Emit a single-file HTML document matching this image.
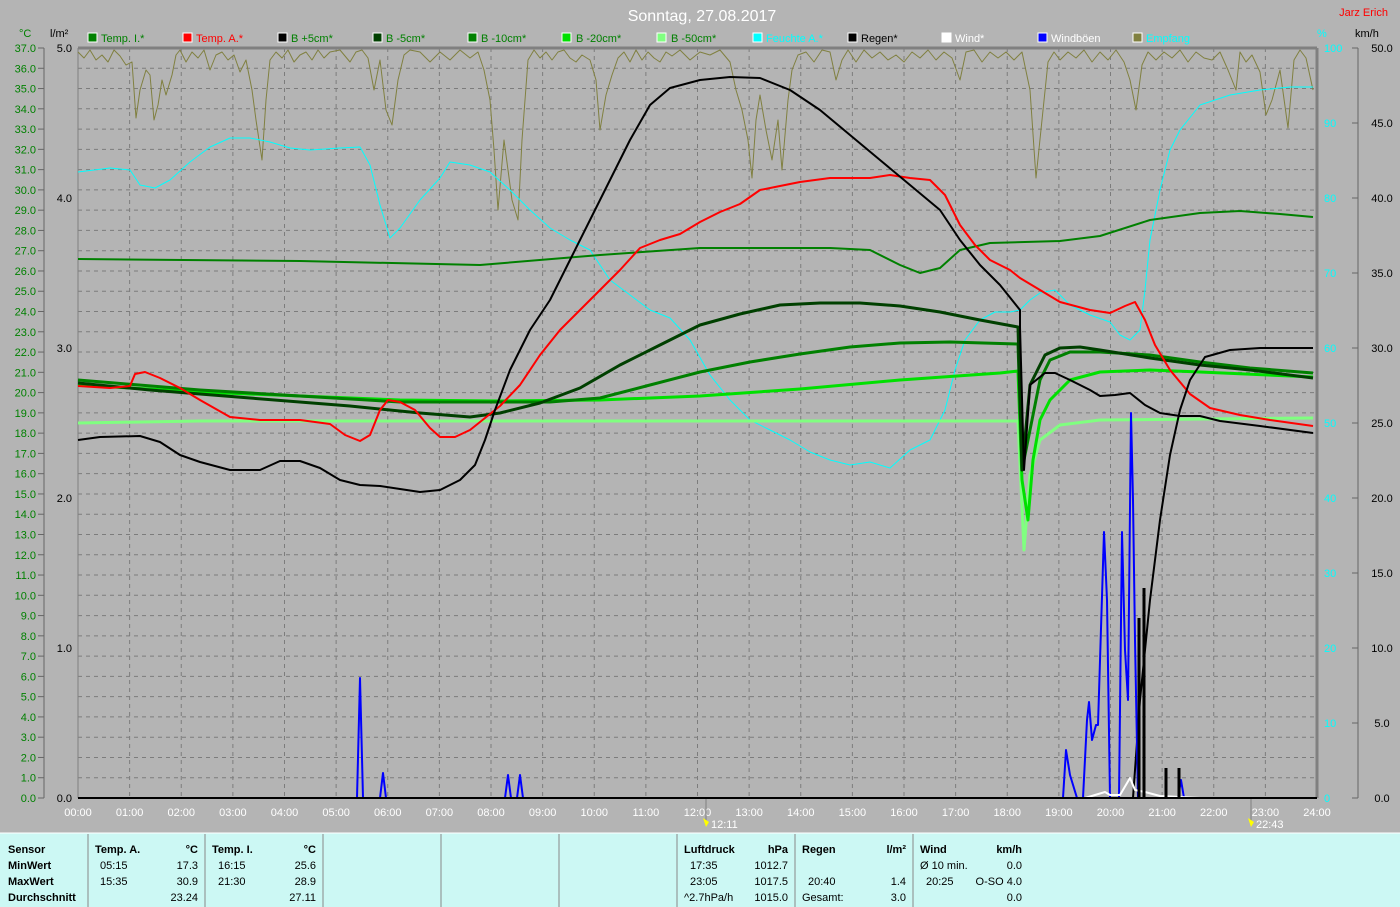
<!DOCTYPE html>
<html><head><meta charset="utf-8"><style>
html,body{margin:0;padding:0;background:#b4b4b4;}
svg{display:block;font-family:"Liberation Sans",sans-serif;}
</style></head><body>
<svg width="1400" height="907" viewBox="0 0 1400 907" xmlns="http://www.w3.org/2000/svg">
<rect width="1400" height="907" fill="#b4b4b4"/>
<text x="702" y="21" font-size="16" fill="#fff" text-anchor="middle">Sonntag, 27.08.2017</text>
<text x="1388" y="16" font-size="11" fill="#f00" text-anchor="end">Jarz Erich</text>
<g font-size="11">
<text x="19" y="37" fill="#008000">°C</text><text x="50" y="37" fill="#000">l/m²</text>
<text x="1317" y="37" fill="#0ff">%</text><text x="1355" y="37" fill="#000">km/h</text>
</g>
<g font-size="11">
<rect x="88" y="33" width="9" height="9" fill="#008000" stroke="#fff"/><text x="101" y="42" fill="#008000">Temp. I.*</text>
<rect x="183" y="33" width="9" height="9" fill="#f00" stroke="#fff"/><text x="196" y="42" fill="#f00">Temp. A.*</text>
<rect x="278" y="33" width="9" height="9" fill="#000" stroke="#fff"/><text x="291" y="42" fill="#008000">B +5cm*</text>
<rect x="373" y="33" width="9" height="9" fill="#004000" stroke="#fff"/><text x="386" y="42" fill="#008000">B -5cm*</text>
<rect x="468" y="33" width="9" height="9" fill="#008000" stroke="#fff"/><text x="481" y="42" fill="#008000">B -10cm*</text>
<rect x="562" y="33" width="9" height="9" fill="#00e000" stroke="#fff"/><text x="576" y="42" fill="#008000">B -20cm*</text>
<rect x="657" y="33" width="9" height="9" fill="#80ff80" stroke="#fff"/><text x="671" y="42" fill="#008000">B -50cm*</text>
<rect x="753" y="33" width="9" height="9" fill="#0ff" stroke="#fff"/><text x="766" y="42" fill="#0ff">Feuchte A.*</text>
<rect x="848" y="33" width="9" height="9" fill="#000" stroke="#fff"/><text x="861" y="42" fill="#000">Regen*</text>
<rect x="942" y="33" width="9" height="9" fill="#fff" stroke="#fff"/><text x="955" y="42" fill="#fff">Wind*</text>
<rect x="1038" y="33" width="9" height="9" fill="#00f" stroke="#fff"/><text x="1051" y="42" fill="#fff">Windböen</text>
<rect x="1133" y="33" width="9" height="9" fill="#808040" stroke="#fff"/><text x="1146" y="42" fill="#0ff">Empfang</text>
</g>
<g id="grid" stroke="#7c7c7c" stroke-width="1" stroke-dasharray="4,4"></g>
<script>
(function(){
var ns="http://www.w3.org/2000/svg",svg=document.currentScript.parentNode,g=document.getElementById('grid');
function el(t,a,p,txt){var e=document.createElementNS(ns,t);for(var k in a)e.setAttribute(k,a[k]);if(txt!==undefined)e.textContent=txt;(p||svg).appendChild(e);return e;}
for(var i=1;i<37;i++){var y=48+i*750/37;el('line',{x1:78,x2:1317,y1:y,y2:y},g);}
for(var h=1;h<24;h++){var x=78+h*1239/24;el('line',{x1:x,x2:x,y1:48,y2:798},g);}
var lab=el('g',{'font-size':11});
for(var i=0;i<=37;i++){var y=798-i*750/37;el('text',{x:36,y:y+4,fill:'#008000','text-anchor':'end'},lab,(i).toFixed(1));el('line',{x1:38,x2:44,y1:y,y2:y,stroke:'#666'},lab);}
el('line',{x1:44,x2:44,y1:48,y2:798,stroke:'#666'},lab);
for(var i=0;i<=5;i++){var y=798-i*150;el('text',{x:72,y:y+4,fill:'#000','text-anchor':'end'},lab,i.toFixed(1));}
for(var i=0;i<=10;i++){var y=798-i*75;el('text',{x:1324,y:y+4,fill:'#0ff'},lab,String(i*10));el('text',{x:1382,y:y+4,fill:'#000','text-anchor':'middle'},lab,(i*5).toFixed(1));el('line',{x1:1352,x2:1358,y1:y,y2:y,stroke:'#666'},lab);}
el('line',{x1:1358,x2:1358,y1:48,y2:798,stroke:'#666'},lab);
for(var h=0;h<=24;h++){var x=78+h*1239/24;el('text',{x:x,y:816,fill:'#fff','text-anchor':'middle'},lab,(h<10?'0':'')+h+':00');}
})();
</script>
<line x1="78" y1="48" x2="1317" y2="48" stroke="#808080" stroke-width="3"/>
<line x1="78" y1="48" x2="78" y2="798" stroke="#808080" stroke-width="1"/>
<line x1="1317" y1="48" x2="1317" y2="798" stroke="#808080" stroke-width="3"/>
<line x1="706" y1="798" x2="706" y2="822" stroke="#808080"/>
<line x1="1251" y1="798" x2="1251" y2="822" stroke="#808080"/>
<g font-size="11" fill="#fff"><text x="711" y="828">12:11</text><text x="1256" y="828">22:43</text></g>
<path d="M703 818l3 9 3-5z" fill="#ff0"/><path d="M1248 818l3 9 3-5z" fill="#ff0"/>
<g fill="none" stroke-linejoin="round">
<polyline stroke="#808040" stroke-width="1" points="78,52 84,58 90,50 96,60 102,55 108,62 114,50 120,56 126,65 132,62 136,118 140,90 146,70 150,75 154,120 158,105 162,80 166,95 172,75 176,55 180,50 186,62 192,52 198,58 204,50 210,70 216,55 222,52 228,60 234,55 240,72 246,60 252,90 256,120 262,160 266,100 270,60 276,52 282,58 288,50 294,62 300,55 306,52 312,60 318,50 324,58 330,52 340,50 350,62 356,52 362,50 368,58 374,90 380,60 386,110 392,125 398,80 404,55 410,50 420,52 430,62 440,52 450,60 460,50 470,58 478,52 484,70 490,100 494,150 498,210 504,140 508,170 512,200 518,220 522,140 528,60 534,50 540,58 546,52 552,60 558,52 564,50 570,58 576,62 582,55 590,60 596,80 600,130 606,95 612,75 618,58 624,52 630,62 636,50 642,60 648,52 654,58 660,62 666,52 672,56 680,50 690,60 700,52 710,55 720,50 730,62 736,90 742,110 748,140 752,178 756,120 760,95 766,130 772,160 778,120 782,170 788,100 792,70 798,55 806,52 814,62 822,50 830,52 836,80 842,60 848,50 856,62 864,50 872,58 880,52 888,60 896,55 904,62 912,52 920,58 928,50 936,60 944,52 952,58 960,80 966,52 974,50 982,62 990,52 998,58 1006,52 1014,60 1022,52 1030,90 1036,178 1042,120 1048,62 1054,52 1060,60 1068,52 1076,58 1084,50 1092,62 1100,52 1108,60 1116,50 1124,62 1130,80 1136,110 1142,65 1148,52 1156,60 1164,52 1172,58 1180,50 1188,62 1196,52 1204,58 1212,60 1220,52 1228,70 1236,90 1240,52 1246,62 1252,55 1260,72 1266,115 1272,100 1280,70 1288,128 1294,60 1300,50 1306,58 1313,90"/>
<polyline stroke="#0ff" stroke-width="1" points="78,172 110,168 130,170 140,185 155,188 170,180 190,162 210,147 230,138 250,138 270,142 290,148 310,150 340,148 360,147 370,165 380,205 390,238 400,228 420,200 440,178 450,162 470,165 490,172 510,190 530,210 550,228 570,240 590,250 610,280 630,295 650,310 670,318 690,340 710,375 730,400 750,420 770,430 790,440 810,452 830,460 850,465 870,462 890,468 910,450 930,440 945,410 955,370 965,340 980,320 995,312 1010,312 1020,310 1030,300 1040,293 1055,290 1070,305 1090,315 1110,322 1120,335 1130,340 1140,330 1145,290 1150,240 1160,190 1170,150 1180,130 1200,105 1230,95 1260,90 1290,87 1313,87"/>
<polyline stroke="#008000" stroke-width="2" points="78,259 300,261 480,265 600,255 700,248 830,248 870,250 900,265 920,273 940,268 960,250 990,243 1060,241 1100,236 1150,220 1200,213 1240,211 1280,214 1313,217"/>
<polyline stroke="#80ff80" stroke-width="3" points="78,423 200,421 1018,421 1024,550 1030,475 1040,440 1060,425 1100,420 1313,418"/>
<polyline stroke="#00e000" stroke-width="3" points="78,385 200,392 300,396 400,400 500,401 600,400 700,396 800,389 900,380 1000,373 1018,371 1022,480 1028,520 1033,460 1040,420 1050,400 1070,380 1100,372 1150,370 1200,372 1313,377"/>
<polyline stroke="#008000" stroke-width="3" points="78,380 200,390 300,396 400,402 500,402 550,402 600,398 650,385 700,372 750,362 800,354 850,347 900,343 950,342 1018,344 1022,470 1030,430 1040,380 1050,360 1070,352 1100,352 1150,355 1200,362 1250,368 1313,373"/>
<polyline stroke="#004000" stroke-width="3" points="78,383 150,390 250,398 350,406 420,413 470,417 500,413 540,403 580,388 620,365 660,345 700,325 740,314 780,305 820,303 860,303 900,306 940,312 980,320 1018,327 1022,470 1030,385 1035,375 1045,355 1060,348 1080,347 1100,350 1150,358 1200,365 1250,370 1313,378"/>
<polyline stroke="#f00" stroke-width="2" points="78,386 110,388 130,386 135,374 145,372 160,378 180,388 200,400 230,417 260,420 300,420 330,424 345,435 360,441 370,435 380,410 388,400 400,402 415,410 430,428 440,437 455,437 470,430 485,418 500,406 520,385 540,355 560,330 580,310 600,290 620,270 640,248 660,240 680,234 700,222 720,212 740,204 760,190 780,186 800,182 830,178 870,178 890,175 910,178 930,180 945,195 960,225 975,245 990,260 1010,270 1020,278 1040,290 1060,302 1090,310 1110,313 1125,306 1135,302 1145,320 1155,345 1170,370 1190,394 1210,408 1240,415 1270,420 1313,426"/>
<polyline stroke="#000" stroke-width="2" points="78,440 100,437 140,436 160,442 180,455 200,462 230,470 260,470 280,461 300,461 320,468 340,480 360,485 380,486 400,489 420,492 440,490 460,480 475,465 485,440 495,410 510,370 530,330 550,300 570,260 590,220 610,180 630,140 650,105 670,88 700,80 730,77 760,78 790,90 820,110 850,135 880,160 910,185 940,210 960,240 980,265 1000,285 1020,310 1020,327 1024,470 1030,385 1045,373 1055,373 1070,380 1090,390 1100,396 1115,395 1130,393 1145,405 1160,413 1180,416 1200,416 1220,421 1260,426 1313,433"/>
<polyline stroke="#000" stroke-width="2" points="1133,798 1140,700 1150,600 1160,520 1170,455 1180,410 1190,380 1205,357 1230,350 1260,348 1313,348"/>
<polyline stroke="#00f" stroke-width="2" points="357,798 360,678 363,798 380,798 383,773 386,798 505,798 508,775 511,798 517,798 520,775 523,798 1063,798 1066,750 1070,775 1077,798 1083,798 1087,720 1089,702 1092,740 1096,725 1098,725 1104,532 1107,600 1110,798 1119,798 1122,532 1125,650 1128,700 1131,413 1133,500 1135,640 1138,798 1178,798 1181,780 1184,798"/>
<polyline stroke="#fff" stroke-width="2" points="1085,798 1095,795 1105,792 1110,795 1120,795 1130,778 1135,790 1145,792 1160,796 1200,798"/>
</g>
<g stroke="#000" stroke-width="3">
<line x1="1139" y1="798" x2="1139" y2="618"/><line x1="1144" y1="798" x2="1144" y2="588"/>
<line x1="1166" y1="798" x2="1166" y2="768"/><line x1="1179" y1="798" x2="1179" y2="768"/>
</g>
<line x1="78" y1="798" x2="1317" y2="798" stroke="#000" stroke-width="2"/>
<rect x="0" y="833" width="1400" height="74" fill="#ccf8f4"/>
<line x1="0" y1="833" x2="1400" y2="833" stroke="#fff"/>
<g stroke="#888"><line x1="88" y1="834" x2="88" y2="907"/><line x1="205" y1="834" x2="205" y2="907"/><line x1="323" y1="834" x2="323" y2="907"/><line x1="441" y1="834" x2="441" y2="907"/><line x1="559" y1="834" x2="559" y2="907"/><line x1="677" y1="834" x2="677" y2="907"/><line x1="795" y1="834" x2="795" y2="907"/><line x1="913" y1="834" x2="913" y2="907"/></g>
<g font-size="11" fill="#000">
<g font-weight="bold"><text x="8" y="853">Sensor</text><text x="8" y="869">MinWert</text><text x="8" y="885">MaxWert</text><text x="8" y="901">Durchschnitt</text>
<text x="95" y="853">Temp. A.</text><text x="198" y="853" text-anchor="end">°C</text>
<text x="212" y="853">Temp. I.</text><text x="316" y="853" text-anchor="end">°C</text>
<text x="684" y="853">Luftdruck</text><text x="788" y="853" text-anchor="end">hPa</text>
<text x="802" y="853">Regen</text><text x="906" y="853" text-anchor="end">l/m²</text>
<text x="920" y="853">Wind</text><text x="1022" y="853" text-anchor="end">km/h</text></g>
<text x="100" y="869">05:15</text><text x="198" y="869" text-anchor="end">17.3</text>
<text x="100" y="885">15:35</text><text x="198" y="885" text-anchor="end">30.9</text>
<text x="198" y="901" text-anchor="end">23.24</text>
<text x="218" y="869">16:15</text><text x="316" y="869" text-anchor="end">25.6</text>
<text x="218" y="885">21:30</text><text x="316" y="885" text-anchor="end">28.9</text>
<text x="316" y="901" text-anchor="end">27.11</text>
<text x="690" y="869">17:35</text><text x="788" y="869" text-anchor="end">1012.7</text>
<text x="690" y="885">23:05</text><text x="788" y="885" text-anchor="end">1017.5</text>
<text x="684" y="901">^2.7hPa/h</text><text x="788" y="901" text-anchor="end">1015.0</text>
<text x="808" y="885">20:40</text><text x="906" y="885" text-anchor="end">1.4</text>
<text x="802" y="901">Gesamt:</text><text x="906" y="901" text-anchor="end">3.0</text>
<text x="920" y="869">Ø 10 min.</text><text x="1022" y="869" text-anchor="end">0.0</text>
<text x="926" y="885">20:25</text><text x="1022" y="885" text-anchor="end">O-SO 4.0</text>
<text x="1022" y="901" text-anchor="end">0.0</text>
</g>
</svg>
</body></html>
